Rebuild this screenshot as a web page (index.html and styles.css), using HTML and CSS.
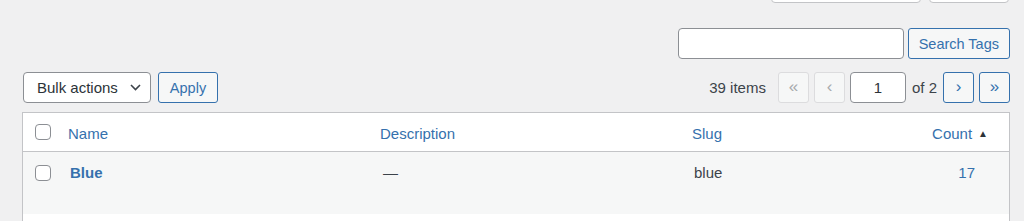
FILE: index.html
```html
<!DOCTYPE html>
<html>
	<head>
		<meta charset="utf-8" />
		<title>Tags</title>
		<link rel="stylesheet" href="styles.css">
	</head>
	<body>
		<div id="wrap">
			<div class="screen-meta">
				<span class="meta-tab wide"></span>
				<span class="meta-tab"></span>
			</div>
			<div class="search-box">
				<input type="search" class="search-input"/>
				<button class="button">Search Tags</button>
			</div>
			<div class="tablenav">
				<div class="actions">
					<div class="select">Bulk actions
						<svg width="11" height="7" viewBox="0 0 11 7"><path d="M1 1l4.5 4.5L10 1" fill="none" stroke="#3c434a" stroke-width="1.6"/></svg>
					</div>
					<button class="button">Apply</button>
				</div>
				<div class="pagination">
					<span class="num">39 items</span>
					<span class="page-btn disabled">«</span>
					<span class="page-btn disabled">‹</span>
					<input class="page-input" value="1"/>
					<span class="total">of 2</span>
					<span class="page-btn">›</span>
					<span class="page-btn">»</span>
				</div>
			</div>
			<table class="list">
				<thead>
					<tr>
						<th class="col-cb"><span class="cb"></span></th>
						<th class="col-name"><a>Name</a></th>
						<th class="col-desc"><a>Description</a></th>
						<th class="col-slug"><a>Slug</a></th>
						<th class="col-count"><a>Count</a><span class="arrow">▲</span></th>
					</tr>
				</thead>
				<tbody>
					<tr class="alt">
						<td class="col-cb"><span class="cb"></span></td>
						<td class="col-name"><a class="row-title">Blue</a></td>
						<td class="col-desc">—</td>
						<td class="col-slug">blue</td>
						<td class="col-count"><a>17</a></td>
					</tr>
					<tr>
						<td colspan="5" class="empty"></td>
					</tr>
				</tbody>
			</table>
		</div>
	</body>
</html>
```

FILE: styles.css
```css
body, html {
	margin: 0;
	padding: 0;
	background: #f0f0f1;
	font-family: "Liberation Sans", Arial, sans-serif;
	font-size: 15px;
	color: #3c434a;
	overflow: hidden;
}
#wrap {
	padding: 0 14px 0 22px;
}
a {
	color: #3571ad;
	text-decoration: none;
}

.screen-meta {
	display: flex;
	justify-content: flex-end;
	gap: 8px;
	margin-top: -27px;
	padding-right: 1px;
}
.meta-tab {
	width: 78px;
	height: 28px;
	background: #fff;
	border: 1px solid #c3c4c7;
	border-radius: 4px;
}
.meta-tab.wide {
	width: 148px;
}

.search-box {
	display: flex;
	justify-content: flex-end;
	gap: 4px;
	margin-top: 25px;
}
.search-input {
	width: 226px;
	height: 31px;
	box-sizing: border-box;
	border: 1px solid #8c8f94;
	border-radius: 4px;
	background: #fff;
	margin: 0;
}
.button {
	height: 31px;
	box-sizing: border-box;
	padding: 0 10px;
	border: 1px solid #3571ad;
	border-radius: 3px;
	background: #f6f7f7;
	color: #3571ad;
	font-family: inherit;
	font-size: 14.5px;
	margin: 0;
}

.tablenav {
	display: flex;
	justify-content: space-between;
	align-items: center;
	margin-top: 13px;
	height: 31px;
	padding-left: 1px;
}
.actions {
	display: flex;
	gap: 7px;
}
.select {
	width: 128px;
	height: 31px;
	box-sizing: border-box;
	border: 1px solid #8c8f94;
	border-radius: 4px;
	background: #fff;
	color: #2c3338;
	font-size: 15px;
	display: flex;
	align-items: center;
	justify-content: space-between;
	padding: 0 9px 0 13px;
}
.actions .button {
	width: 60px;
	padding: 0;
}

.pagination {
	display: flex;
	align-items: center;
	gap: 5px;
}
.num {
	margin-right: 7px;
}
.page-btn {
	width: 31px;
	height: 31px;
	box-sizing: border-box;
	border: 1px solid #3571ad;
	border-radius: 3px;
	background: #f6f7f7;
	color: #3571ad;
	font-size: 17px;
	display: flex;
	align-items: center;
	justify-content: center;
	padding-bottom: 2px;
}
.page-btn.disabled {
	border-color: #dcdcde;
	color: #a7aaad;
}
.page-input {
	width: 56px;
	height: 31px;
	box-sizing: border-box;
	border: 1px solid #8c8f94;
	border-radius: 4px;
	text-align: center;
	font-family: inherit;
	font-size: 15px;
	color: #2c3338;
	margin: 0;
}
.total {
	margin: 0 1px;
}

.list {
	margin-top: 9px;
	width: 100%;
	border-collapse: collapse;
	border: 1px solid #c3c4c7;
	background: #fff;
	table-layout: fixed;
}
.list th, .list td {
	text-align: left;
	font-weight: normal;
	padding: 0 10px;
}
.list thead tr {
	height: 39px;
	border-bottom: 1px solid #c3c4c7;
}
.list thead th {
	padding-top: 3px;
}
.list tbody tr.alt {
	background: #f6f7f7;
	height: 62px;
}
.list tbody td {
	vertical-align: top;
	padding-top: 12px;
}
.list td.empty {
	height: 20px;
}
.col-cb {
	width: 15px;
	padding-left: 12px !important;
	padding-right: 8px !important;
}
.list thead th.col-cb {
	padding-top: 0;
}
.list tbody td.col-cb {
	padding-top: 13px;
}
.cb {
	display: block;
	width: 16px;
	height: 16px;
	box-sizing: border-box;
	border: 1px solid #8c8f94;
	border-radius: 4px;
	background: #fff;
}
.col-name {
	width: 292px;
}
.col-desc {
	width: 292px;
}
.col-count {
	width: 110px;
	text-align: right !important;
	padding-right: 21px !important;
}
.list tbody td.col-count {
	padding-right: 34px !important;
}
.arrow {
	font-size: 10px;
	color: #2c3338;
	margin-left: 6px;
	vertical-align: 2px;
}
.row-title {
	font-weight: bold;
	margin-left: 2px;
}
.list tbody td.col-desc {
	padding-left: 13px;
}
.list tbody td.col-slug {
	padding-left: 12px;
}
```
